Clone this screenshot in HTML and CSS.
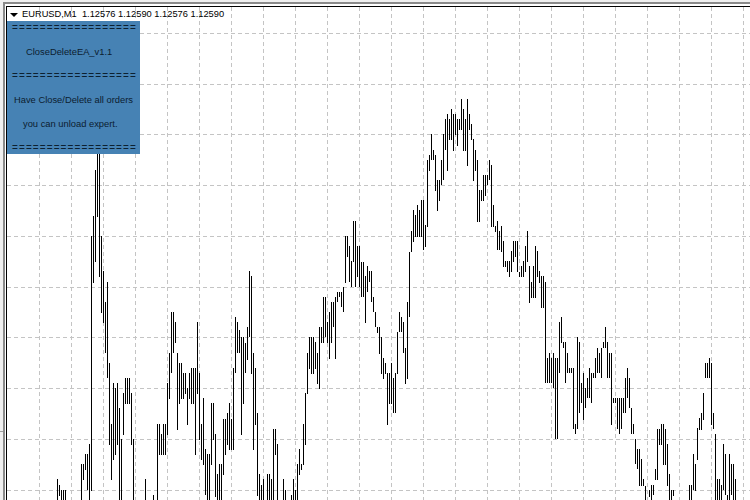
FILE: index.html
```html
<!DOCTYPE html>
<html lang="en">
<head>
<meta charset="utf-8">
<title>EURUSD,M1</title>
<link rel="stylesheet" href="styles.css">
</head>
<body>
<div class="frame">
  <div class="canvas">
    <svg class="chart" viewBox="7 7 743 493" width="743" height="493" shape-rendering="crispEdges" aria-hidden="true">
      <path class="grid" d="M39.5 7V500M71.5 7V500M103.5 7V500M135.5 7V500M167.5 7V500M199.5 7V500M231.5 7V500M263.5 7V500M295.5 7V500M327.5 7V500M359.5 7V500M391.5 7V500M423.5 7V500M455.5 7V500M487.5 7V500M519.5 7V500M551.5 7V500M583.5 7V500M615.5 7V500M647.5 7V500M679.5 7V500M711.5 7V500M743.5 7V500M7 33.5H750M7 84.5H750M7 134.5H750M7 185.5H750M7 236.5H750M7 287.5H750M7 337.5H750M7 388.5H750M7 439.5H750M7 490.5H750"/>
      <path class="bars" d="M57.5 479V500M59.5 485V496M61.5 490V500M63.5 490V500M65.5 490V500M81.5 464V500M83.5 464V480M85.5 454V470M87.5 454V490M89.5 444V500M91.5 236V491M93.5 216V283M95.5 170V262M97.5 150V217M99.5 150V277M101.5 236V313M103.5 271V323M105.5 302V353M107.5 282V378M109.5 363V445M111.5 424V480M113.5 383V460M115.5 388V455M117.5 383V445M119.5 408V500M121.5 439V500M123.5 393V435M125.5 378V404M127.5 378V404M129.5 378V404M131.5 393V445M133.5 439V500M145.5 479V500M153.5 495V500M157.5 424V500M159.5 424V455M161.5 434V455M163.5 424V455M165.5 424V455M167.5 383V435M169.5 353V399M171.5 312V373M173.5 312V353M175.5 322V343M177.5 353V430M179.5 363V404M181.5 363V399M183.5 373V399M185.5 373V394M187.5 388V425M189.5 373V399M191.5 368V404M193.5 368V404M195.5 368V455M197.5 322V394M199.5 373V440M201.5 424V460M203.5 398V465M205.5 449V495M207.5 454V500M209.5 454V500M211.5 403V465M213.5 403V440M215.5 434V497M217.5 474V500M219.5 464V500M221.5 464V500M223.5 419V475M225.5 419V455M227.5 413V445M229.5 403V450M231.5 419V450M233.5 368V450M235.5 317V373M237.5 322V353M239.5 330V353M241.5 337V435M243.5 337V404M245.5 343V373M247.5 327V360M249.5 271V337M251.5 276V374M253.5 353V450M255.5 368V425M257.5 413V496M259.5 474V500M261.5 485V500M263.5 479V500M267.5 474V500M269.5 474V500M271.5 479V500M273.5 429V500M275.5 429V455M277.5 444V500M283.5 479V500M285.5 490V500M291.5 495V500M293.5 479V500M295.5 490V500M297.5 464V500M299.5 449V475M301.5 464V470M303.5 424V465M305.5 393V445M307.5 353V394M309.5 337V369M311.5 337V374M313.5 337V374M315.5 342V369M317.5 353V384M319.5 327V389M321.5 327V343M323.5 297V343M325.5 297V337M327.5 322V343M329.5 312V359M331.5 302V343M333.5 302V327M335.5 297V359M337.5 292V302M339.5 292V297M341.5 292V307M343.5 287V312M345.5 236V283M347.5 236V257M349.5 246V282M351.5 261V287M353.5 221V262M355.5 221V287M357.5 246V277M359.5 246V287M361.5 262V297M363.5 262V297M365.5 276V323M367.5 266V292M369.5 271V282M371.5 271V302M373.5 297V312M375.5 312V327M377.5 327V333M379.5 327V354M381.5 337V374M383.5 358V379M385.5 363V374M387.5 373V425M389.5 373V404M391.5 363V404M393.5 378V413M395.5 373V413M397.5 332V374M399.5 312V332M401.5 317V332M403.5 322V353M405.5 348V384M407.5 302V379M409.5 252V317M411.5 231V252M413.5 210V242M415.5 215V237M417.5 205V237M419.5 210V237M421.5 200V237M423.5 200V250M425.5 225V247M427.5 160V227M429.5 155V171M431.5 134V160M433.5 150V160M435.5 155V191M437.5 180V211M439.5 180V201M441.5 160V185M443.5 134V180M445.5 119V150M447.5 114V171M449.5 119V140M451.5 109V140M453.5 114V151M455.5 114V135M457.5 119V146M459.5 119V130M461.5 99V130M463.5 109V151M465.5 119V151M467.5 99V166M469.5 114V130M471.5 124V140M473.5 139V181M475.5 150V171M477.5 160V222M479.5 190V222M481.5 190V201M483.5 175V201M485.5 175V196M487.5 175V185M489.5 160V180M491.5 165V227M493.5 205V227M495.5 226V232M497.5 221V250M499.5 231V250M501.5 226V252M503.5 241V267M505.5 261V267M507.5 261V272M509.5 261V277M511.5 251V272M513.5 241V262M515.5 241V257M517.5 241V272M519.5 272V277M521.5 266V277M523.5 261V277M525.5 246V272M527.5 231V262M529.5 266V303M531.5 282V298M533.5 266V298M535.5 246V298M537.5 251V277M539.5 271V283M541.5 276V308M543.5 276V308M545.5 282V383M547.5 358V383M549.5 353V383M551.5 358V383M553.5 353V388M555.5 358V439M557.5 358V439M559.5 322V373M561.5 317V343M563.5 342V348M565.5 342V383M567.5 353V373M569.5 368V373M571.5 368V373M573.5 368V429M575.5 424V434M577.5 337V429M579.5 342V413M581.5 383V403M583.5 373V420M585.5 388V408M587.5 378V398M589.5 368V398M591.5 373V403M593.5 373V378M595.5 358V378M597.5 348V373M599.5 353V373M601.5 348V378M603.5 342V348M605.5 327V348M607.5 342V378M609.5 353V378M611.5 353V425M613.5 398V403M615.5 398V403M617.5 398V429M619.5 398V434M621.5 398V429M623.5 398V413M625.5 378V413M627.5 368V398M629.5 378V408M631.5 408V434M633.5 424V434M635.5 439V464M637.5 449V469M639.5 449V486M641.5 459V486M643.5 479V486M645.5 486V500M649.5 490V497M651.5 485V500M653.5 485V495M655.5 469V480M657.5 429V480M659.5 429V445M661.5 424V445M663.5 424V465M665.5 429V465M667.5 444V486M669.5 474V500M671.5 490V500M673.5 490V496M689.5 485V500M691.5 485V500M693.5 454V490M695.5 464V491M697.5 428V460M699.5 418V430M701.5 413V430M703.5 393V420M705.5 363V378M707.5 363V378M709.5 358V378M711.5 363V425M713.5 413V429M715.5 434V500M717.5 479V500M719.5 479V500M721.5 485V500M723.5 444V490M725.5 454V495M727.5 495V500M729.5 454V500M731.5 464V495M733.5 464V500M735.5 479V500"/>
    </svg>
    <div class="legend">
      <span class="caret"></span>
      <span class="quote">EURUSD,M1&nbsp; 1.12576 1.12590 1.12576 1.12590</span>
    </div>
    <div class="panel">
      <div class="row rule">==================</div>
      <div class="row name">CloseDeleteEA_v1.1</div>
      <div class="row rule">==================</div>
      <div class="row note-a">Have Close/Delete all orders</div>
      <div class="row note-b">you can unload expert.</div>
      <div class="row rule">==================</div>
    </div>
  </div>
</div>
<div class="tick"></div>
</body>
</html>
```
FILE: styles.css
```css
html, body {
  margin: 0;
  height: 100%;
  overflow: hidden;
}
body {
  background: #f0f0f0;
  font-family: "Liberation Sans", Arial, sans-serif;
  position: relative;
  padding-top: 2px;
  box-sizing: border-box;
}
.frame {
  box-sizing: border-box;
  height: 100%;
  margin-left: 3px;
  padding: 2px 0 0 1px;
  border-top: 2px solid #8a8a8a;
  border-left: 2px solid #8a8a8a;
  background: #fff;
  display: flex;
}
.canvas {
  position: relative;
  flex: 1;
  background: #fff;
  border-top: 1px solid #000;
  border-left: 1px solid #000;
  overflow: hidden;
}
.chart {
  display: block;
}
.grid {
  fill: none;
  stroke: #c4c4c4;
  stroke-width: 1;
  stroke-dasharray: 4 3;
}
.bars {
  fill: none;
  stroke: #000;
  stroke-width: 1;
}
.legend {
  position: absolute;
  left: 3px;
  top: 1px;
  height: 13px;
  display: flex;
  align-items: center;
  gap: 4px;
  font-size: 9.3px;
  line-height: 13px;
  color: #000;
  white-space: pre;
}
.caret {
  width: 0;
  height: 0;
  border-left: 4px solid transparent;
  border-right: 4px solid transparent;
  border-top: 4px solid #000;
}
.panel {
  position: absolute;
  left: 0;
  top: 14px;
  width: 133px;
  height: 133px;
  box-sizing: border-box;
  padding-top: 1px;
  background: #4682b4;
  color: #0c2030;
  font-size: 9.35px;
  white-space: nowrap;
}
.row {
  height: 24px;
  line-height: 12px;
}
.rule {
  padding-left: 5px;
  font-size: 10px;
  letter-spacing: 1.1px;
}
.name { padding-left: 19px; }
.note-a { padding-left: 7px; }
.note-b { padding-left: 16px; }
.tick {
  position: absolute;
  left: 0;
  top: 431px;
  width: 3px;
  height: 1px;
  background: #a0a0a0;
}
```
